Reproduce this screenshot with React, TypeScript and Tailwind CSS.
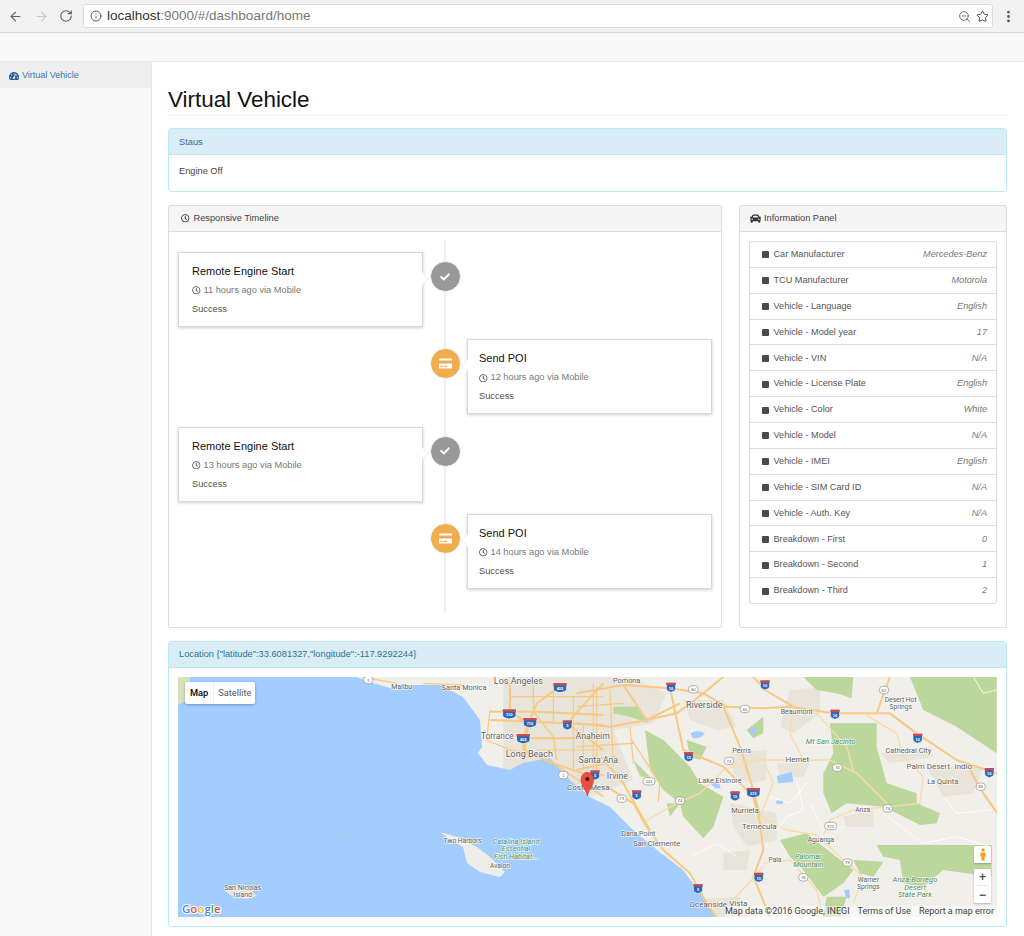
import * as React from "react";
import { ArrowLeft, ArrowRight, RotateCw, Info, ZoomOut, Star, EllipsisVertical } from "lucide-react";
import { FaTachometerAlt, FaRegClock, FaCar, FaCheck, FaCreditCard } from "react-icons/fa";

const infoRows = [
  ["Car Manufacturer", "Mercedes-Benz"],
  ["TCU Manufacturer", "Motorola"],
  ["Vehicle - Language", "English"],
  ["Vehicle - Model year", "17"],
  ["Vehicle - VIN", "N/A"],
  ["Vehicle - License Plate", "English"],
  ["Vehicle - Color", "White"],
  ["Vehicle - Model", "N/A"],
  ["Vehicle - IMEI", "English"],
  ["Vehicle - SIM Card ID", "N/A"],
  ["Vehicle - Auth. Key", "N/A"],
  ["Breakdown - First", "0"],
  ["Breakdown - Second", "1"],
  ["Breakdown - Third", "2"],
];

const events = [
  { title: "Remote Engine Start", time: "11 hours ago via Mobile", side: "left" },
  { title: "Send POI", time: "12 hours ago via Mobile", side: "right" },
  { title: "Remote Engine Start", time: "13 hours ago via Mobile", side: "left" },
  { title: "Send POI", time: "14 hours ago via Mobile", side: "right" },
];

function TimelineCard({ title, time, side }: { title: string; time: string; side: string }) {
  return (
    <div
      className={`relative h-[75px] w-[245px] border border-[#d8d8d8] bg-white pt-[11px] shadow-[0_1px_3px_rgba(0,0,0,0.2)] ${
        side === "left" ? "pl-[13px]" : "pl-[11px]"
      }`}
    >
      {side === "left" ? (
        <span className="absolute right-[-5px] top-[21px] h-[9px] w-[9px] rotate-45 border-r border-t border-[#f0f0f0] bg-white" />
      ) : (
        <span className="absolute left-[-5px] top-[21px] h-[9px] w-[9px] rotate-45 border-b border-l border-[#f0f0f0] bg-white" />
      )}
      <div className="text-[11px] leading-[15px] text-[#111]">{title}</div>
      <div className="mt-[5px] flex items-center gap-[3px] text-[9.25px] leading-[13px] text-[#777]">
        <FaRegClock className="text-[8.5px] text-[#555]" />
        <span>{time}</span>
      </div>
      <div className="mt-[6px] text-[9.25px] leading-[13px] text-[#555]">Success</div>
    </div>
  );
}

function Interstate({ x, y, n }: { x: number; y: number; n: string }) {
  const w = n.length > 2 ? 40 : 28;
  return (
    <g transform={`translate(${x - w / 2},${y - 14})`}>
      <path d={`M0 0H${w}V18Q${w} 26 ${w / 2} 29Q0 26 0 18Z`} fill="#2f66b5" stroke="#fff" strokeWidth="2" />
      <rect x="0" y="0" width={w} height="7" fill="#cf4a4a" />
      <text x={w / 2} y="21" textAnchor="middle" fontSize="12" fill="#fff" fontWeight="700">{n}</text>
    </g>
  );
}

function Route({ x, y, n }: { x: number; y: number; n: string }) {
  const w = n.length > 2 ? 36 : 28;
  return (
    <g>
      <rect x={x - w / 2} y={y - 11} width={w} height="22" rx="10" fill="#fff" stroke="#8c8c8c" strokeWidth="2" />
      <text x={x} y={y + 5} textAnchor="middle" fontSize="13" fill="#555">{n}</text>
    </g>
  );
}

const leftLabels: [string, number, number, number?, string?][] = [
  ["Los Angeles", 1045, 124, 27],
  ["Malibu", 695, 140, 21],
  ["Santa Monica", 882, 144, 22],
  ["Torrance", 982, 291, 25],
  ["Long Beach", 1078, 343, 27],
  ["Two Harbors", 878, 603, 20],
  ["Catalina Island", 1038, 605, 22, "g"],
  ["Essential", 1038, 628, 22, "g"],
  ["Fish Habitat...", 1038, 651, 22, "g"],
  ["Avalon", 990, 680, 20],
  ["San Nicolas", 218, 743, 21],
  ["Island", 218, 765, 21],
];

const rightLabels: [string, number, number, number?, string?][] = [
  ["Pomona", 110, 32, 22],
  ["Riverside", 343, 106, 27],
  ["Beaumont", 620, 125, 21],
  ["Desert Hot", 932, 91, 20],
  ["Springs", 932, 111, 20],
  ["Mt San Jacinto", 722, 217, 23, "g"],
  ["Cathedral City", 955, 244, 22],
  ["Perris", 455, 242, 22],
  ["Hemet", 622, 270, 24],
  ["Palm Desert", 1015, 290, 24],
  ["Indio", 1120, 291, 24],
  ["La Quinta", 1058, 337, 22],
  ["Anaheim", 8, 200, 26],
  ["Santa Ana", 25, 272, 26],
  ["Irvine", 82, 320, 26],
  ["Costa Mesa", -5, 353, 24],
  ["Lake Elsinore", 390, 333, 22],
  ["Murrieta", 465, 422, 22],
  ["Temecula", 508, 470, 24],
  ["Aguanga", 693, 511, 20],
  ["Anza", 818, 422, 20],
  ["Dana Point", 145, 491, 21],
  ["San Clemente", 200, 522, 23],
  ["Pala", 555, 570, 20],
  ["Palomar", 655, 562, 22, "g"],
  ["Mountain", 655, 585, 22, "g"],
  ["Warner", 835, 631, 20],
  ["Springs", 835, 651, 20],
  ["Anza-Borrego", 975, 631, 23, "g"],
  ["Desert", 975, 653, 23, "g"],
  ["State Park", 975, 676, 23, "g"],
  ["Oceanside", 355, 705, 24],
  ["Vista", 445, 701, 24],
];

function Labels({ items }: { items: [string, number, number, number?, string?][] }) {
  return (
    <g fontFamily="Roboto, 'Liberation Sans', sans-serif" textAnchor="middle" dominantBaseline="middle">
      {items.map(([t, x, y, s, kind], i) => (
        <text
          key={i}
          x={x}
          y={y}
          fontSize={s ?? 23}
          fontStyle={kind === "g" ? "italic" : "normal"}
          fill={kind === "g" ? "#4f8f57" : "#5f5f5f"}
          stroke="#ffffff"
          strokeOpacity="0.75"
          strokeWidth="4"
          paintOrder="stroke"
        >
          {t}
        </text>
      ))}
    </g>
  );
}

function MapDrawing() {
  return (
    <svg viewBox="0 0 819 240" className="block h-full w-full">
      <rect width="819" height="240" fill="#f1efe9" />
      {/* urban patches */}
      <g transform="translate(412,-7) scale(0.33333)" fill="#e8e4da">
        <path d="M-260 20H120L230 70 190 160 70 180 130 330 0 380-120 340-260 300Z" />
        <path d="M280 90L400 90 440 170 380 180 300 150Z" />
        <path d="M600 60L690 50 690 130 610 190 570 170Z" />
        <path d="M420 250L530 240 530 330 480 340 430 310Z" />
        <path d="M420 400L560 430 560 510 470 530 430 470Z" />
        <path d="M400 550L480 540 470 600 400 600Z" />
        <path d="M560 280L660 280 640 320 570 320Z" />
        <path d="M760 440L850 420 850 470 770 470Z" />
        <path d="M300 690L450 680 480 740 330 740Z" />
        <path d="M1010 290L1180 290 1150 370 1060 380Z" />
        <path d="M870 250L1020 230 1030 260 900 280Z" />
      </g>
      {/* parks */}
      <g transform="translate(412,-7) scale(0.33333)" fill="#bbd79b">
        <path d="M165 180L220 210 300 290 330 340 400 380 370 470 340 505 280 440 270 400 220 360 180 300Z" />
        <path d="M720 160L860 160 860 230 890 340 980 370 980 400 1050 430 1040 460 990 465 920 430 880 410 770 400 725 430 700 370 700 310 730 250Z" />
        <path d="M960 21L1220 21V250L1100 170 1000 120Z" />
        <path d="M640 21H790L785 85 740 70 680 60Z" />
        <path d="M570 510L650 490 700 530 790 600 760 640 700 680 640 600 600 560Z" />
        <path d="M860 525H1205V620L1060 600 1000 650 940 640 930 570 880 560Z" />
        <path d="M710 680H770L750 740H700Z" />
        <path d="M70 110L140 110 175 160 120 140 70 130Z" />
        <path d="M470 180L520 140 520 190 490 205Z" />
        <path d="M290 210L350 230 330 270 300 260Z" />
        <path d="M230 400L270 400 240 440Z" />
        <path d="M130 270L180 320 150 320Z" />
        <path d="M790 570L880 575 850 620 810 610Z" />
      </g>
      {/* water */}
      <path
        d="M12 0H179L195 6 219 13 230 8 262 8 285 20 302 43 304 70 300 76 309 88 332 93 345 86 372 81 392 103 412 120 432 130 455 153 479 173 505 193 525 220 539 240H0V28L12 20Z"
        fill="#a3ccff"
      />
      <path d="M0 0H12V20L0 28Z" fill="#d7e2bb" />
      <path d="M262 155L279 160 299 170 312 180 327 195 322 200 302 195 289 186 285 170 272 163Z" fill="#efede7" />
      <path d="M47 214L60 208 72 213 79 219 68 222 55 220Z" fill="#e4e2dc" />
      <path d="M165 153L168 155 166 158Z" fill="#bcd99a" />
      {/* inland lakes */}
      <g transform="translate(412,-7) scale(0.33333)" fill="#a3ccff">
        <path d="M302 190Q320 178 345 190 330 208 308 204Z" />
        <path d="M478 178L500 170 498 192 484 195Z" />
        <path d="M560 318L605 305 610 335 565 340Z" />
        <path d="M360 340L385 330 392 355 375 355Z" />
        <path d="M762 660L778 658 780 685 768 684Z" />
        <path d="M558 392L580 390 578 402 560 402Z" />
      </g>
      {/* left roads */}
      <g transform="translate(-8,-37) scale(0.33333)" fill="none" stroke="#f7c983" strokeWidth="6" strokeLinejoin="round">
        <path d="M580 112L680 130 M760 130L880 135" strokeWidth="4" />
        <path d="M1170 140L1100 190 1060 290 1060 330 1150 370 1240 400 1300 405" />
        <path d="M960 215H1100L1300 225" />
        <path d="M1020 130L1020 215 1075 250 1060 360" />
        <path d="M1300 130L1190 250 1300 330" />
        <path d="M960 240L1190 250 1300 255" />
        <path d="M1060 295H1300" />
        <path d="M1090 130V215L1150 290 1160 360" strokeWidth="4" />
        <path d="M960 210L950 300 1020 330 1100 350 1150 370 1300 470" strokeWidth="4" />
        <path d="M1020 170H1300 M1150 130V250 M1210 170V400 M1270 130V400 M1100 330H1300 M1240 250V390" strokeWidth="3.5" />
      </g>
      {/* right roads */}
      <g transform="translate(412,-7) scale(0.33333)" fill="none" stroke="#f7c983" strokeWidth="6" strokeLinejoin="round">
        <path d="M-40 70L100 45 240 55 340 70 410 110 520 115 600 110 730 130 900 130 980 190 1100 270 1190 300 1222 310" />
        <path d="M100 45L170 150 260 130 340 70 400 21" />
        <path d="M240 55L280 240 400 290 490 380 510 460 520 540 490 620 540 742" />
        <path d="M400 110L450 230 490 360 510 440" />
        <path d="M-40 160L60 170 170 150 270 100" />
        <path d="M-40 300L50 280 100 340 150 430 180 480" />
        <path d="M-40 360L50 350 130 400 170 470 220 540 300 610 350 700 380 742" />
        <path d="M1140 300L1180 370 1222 430" />
        <path d="M490 21L525 60 610 110" />
        <path d="M860 130L885 60 900 21" />
        <path d="M125 210L210 340 205 395" strokeWidth="4" />
        <path d="M20 50V330 M-40 110L100 100 M60 60L70 290 M-40 230L130 220 M120 170L130 280 M-40 270L80 260" strokeWidth="3.5" />
      </g>
      <g transform="translate(412,-7) scale(0.33333)" fill="none" stroke="#f9dca6" strokeWidth="4" strokeLinejoin="round">
        <path d="M490 270H720L800 310 900 410 990 400 1000 320" />
        <path d="M170 450L260 400 330 370 400 300 490 270" />
        <path d="M510 440L590 480 680 495 750 560 820 620 790 700" />
        <path d="M520 580L600 570 680 660 700 742" />
        <path d="M430 690L520 590" />
        <path d="M700 495L720 450 790 420 900 410" />
        <path d="M610 110L600 190 640 270" />
        <path d="M680 130L770 230 790 300" />
        <path d="M820 130L920 190 940 260 1000 320" />
        <path d="M520 270L550 340 510 440" />
      </g>
      {/* white minor roads */}
      <g transform="translate(412,-7) scale(0.33333)" fill="none" stroke="#ffffff" strokeWidth="2.5">
        <path d="M620 330L640 420 590 440 560 480" />
        <path d="M660 400L700 480 760 470" />
        <path d="M880 430L1000 520 1100 500 1200 530" />
        <path d="M1060 380L1100 430 1200 420" />
        <path d="M1150 20L1180 70 1220 60" />
        <path d="M540 380L600 400 650 340" />
        <path d="M300 560L380 520 440 560" />
      </g>
      <g transform="translate(-8,-37) scale(0.33333)">
        <Labels items={leftLabels} />
        <Interstate x={1170} y={143} n="405" />
        <Interstate x={1018} y={222} n="110" />
        <Interstate x={1080} y={248} n="710" />
        <Interstate x={1192} y={255} n="5" />
        <Interstate x={1060} y={296} n="405" />
        <Interstate x={1275} y={405} n="5" />
        <Route x={595} y={120} n="1" />
        <Route x={1180} y={405} n="1" />
      </g>
      <g transform="translate(412,-7) scale(0.33333)" fontFamily="'Liberation Sans', sans-serif">
        <Labels items={rightLabels} />
        <Interstate x={243} y={52} n="10" />
        <Interstate x={525} y={45} n="10" />
        <Interstate x={735} y={133} n="10" />
        <Interstate x={983} y={205} n="10" />
        <Interstate x={1198} y={308} n="10" />
        <Interstate x={296} y={260} n="15" />
        <Interstate x={435} y={378} n="15" />
        <Interstate x={490} y={368} n="215" />
        <Interstate x={506} y={622} n="15" />
        <Interstate x={140} y={375} n="5" />
        <Interstate x={324} y={656} n="5" />
        <Route x={310} y={58} n="60" />
        <Route x={465} y={117} n="60" />
        <Route x={882} y={60} n="62" />
        <Route x={1172} y={350} n="86" />
        <Route x={417} y={273} n="74" />
        <Route x={742} y={293} n="74" />
        <Route x={893} y={415} n="74" />
        <Route x={270} y={392} n="74" />
        <Route x={177} y={334} n="241" />
        <Route x={95} y={386} n="73" />
        <Route x={722} y={468} n="371" />
        <Route x={772} y={578} n="79" />
        <Route x={640} y={622} n="76" />
      </g>
      {/* marker */}
      <g transform="translate(-8,-37) scale(0.33333)">
        <path d="M1252 468C1246 445 1233 438 1233 418A19 21 0 0 1 1271 418C1271 438 1258 445 1252 468Z" fill="#ea4f43" stroke="#b8352c" strokeWidth="1.5" />
        <circle cx="1252" cy="417" r="6" fill="#3a0d0a" />
      </g>
      <text x="4" y="236" fontFamily="'Open Sans', sans-serif" fontSize="11.5" fontWeight="600" stroke="#ffffff" strokeWidth="2" paintOrder="stroke">
        <tspan fill="#4d83e8">G</tspan>
        <tspan fill="#e0513f">o</tspan>
        <tspan fill="#f2b632">o</tspan>
        <tspan fill="#4d83e8">g</tspan>
        <tspan fill="#3fa457">l</tspan>
        <tspan fill="#e0513f">e</tspan>
      </text>
    </svg>
  );
}

export default function App() {
  return (
    <div className="flex h-[936px] w-[1024px] flex-col overflow-hidden bg-white font-['Liberation_Sans',Arial,sans-serif] text-[#333]">
      {/* browser chrome */}
      <div className="flex h-[33px] flex-none items-center border-b border-[#d6d6d6] bg-[#f2f2f2] pl-[8px] pr-[8px]">
        <ArrowLeft className="h-[15px] w-[15px] text-[#5f6368]" strokeWidth={1.75} />
        <ArrowRight className="ml-[11px] h-[15px] w-[15px] text-[#c8c8c8]" strokeWidth={1.75} />
        <RotateCw className="ml-[10px] h-[14px] w-[14px] text-[#5f6368]" strokeWidth={2} />
        <div className="ml-[10px] flex h-[24px] flex-1 items-center rounded-[3px] border border-[#dcdcdc] bg-white pl-[6px] pr-[3px]">
          <Info className="h-[12px] w-[12px] text-[#444]" strokeWidth={1.75} />
          <span className="ml-[5px] text-[13.5px] text-[#333]">
            localhost<span className="text-[#777]">:9000/#/dashboard/home</span>
          </span>
          <ZoomOut className="ml-auto h-[13px] w-[13px] text-[#666]" strokeWidth={1.75} />
          <Star className="ml-[5px] h-[13px] w-[13px] text-[#444]" strokeWidth={1.75} />
        </div>
        <EllipsisVertical className="ml-[8px] h-[15px] w-[15px] text-[#555]" strokeWidth={2.5} />
      </div>
      {/* navbar */}
      <div className="h-[29px] flex-none border-b border-[#e7e7e7] bg-[#f8f8f8]" />
      <div className="flex min-h-0 flex-1">
        <aside className="w-[152px] flex-none border-r border-[#e7e7e7] bg-[#f8f8f8]">
          <div className="flex h-[26px] items-center gap-[3px] border-b border-[#ececec] bg-[#eeeeee] pl-[9px] pt-[3px] text-[9px] text-[#337ab7]">
            <FaTachometerAlt className="text-[10px] text-[#2a6496]" />
            <span>Virtual Vehicle</span>
          </div>
        </aside>
        <main className="min-w-0 flex-1 pl-[16px] pr-[17px]">
          <h1 className="mt-[24px] border-b border-[#eeeeee] pb-[1px] text-[22.4px] font-normal leading-[28px] text-[#111]">Virtual Vehicle</h1>

          <section className="mt-[12px] h-[64px] rounded-[3px] border border-[#bce8f1] bg-white">
            <div className="flex h-[26px] items-center rounded-t-[2px] border-b border-[#bce8f1] bg-[#d9edf7] pl-[10px] pt-[3px] text-[9.25px] text-[#31708f]">Staus</div>
            <div className="pl-[10px] pt-[10px] text-[9.25px] leading-[13px] text-[#444]">Engine Off</div>
          </section>

          <div className="mt-[13px] flex h-[423px] gap-[17px]">
            <section className="w-[554px] flex-none rounded-[2px] border border-[#dddddd] bg-white">
              <div className="flex h-[26px] items-center gap-[4px] border-b border-[#dddddd] bg-[#f5f5f5] pl-[12px] text-[9.25px] text-[#444]">
                <FaRegClock className="text-[8.5px] text-[#333]" />
                <span>Responsive Timeline</span>
              </div>
              <div className="relative mx-[9px] mt-[8px] flex flex-col gap-[12.33px] pb-[23px] pt-[12px]">
                <div className="absolute bottom-0 left-[266px] top-0 w-[2px] bg-[#eeeeee]" />
                {events.map((e, i) => (
                  <div key={i} className="relative grid grid-cols-[245px_30px_245px] gap-x-[7px]">
                    <div>{e.side === "left" && <TimelineCard title={e.title} time={e.time} side={e.side} />}</div>
                    <div
                      className={`-ml-[0.5px] mt-[9px] flex h-[31px] w-[31px] items-center justify-center rounded-full border border-[#f4f4f4] text-white ${
                        e.side === "left" ? "bg-[#999999]" : "bg-[#f0ad4e]"
                      }`}
                    >
                      {e.side === "left" ? <FaCheck className="text-[10px]" /> : <FaCreditCard className="text-[13px]" />}
                    </div>
                    <div>{e.side === "right" && <TimelineCard title={e.title} time={e.time} side={e.side} />}</div>
                  </div>
                ))}
              </div>
            </section>

            <section className="min-w-0 flex-1 rounded-[2px] border border-[#dddddd] bg-white">
              <div className="flex h-[26px] items-center gap-[3px] border-b border-[#dddddd] bg-[#f5f5f5] pl-[10px] text-[9.25px] text-[#444]">
                <FaCar className="text-[11px] text-[#333]" />
                <span>Information Panel</span>
              </div>
              <div className="mx-[9px] mt-[9px] flex h-[363px] flex-col rounded-[2px] border border-[#dddddd]">
                {infoRows.map(([k, v]) => (
                  <div key={k} className="flex flex-1 items-center border-b border-[#dddddd] pl-[12px] pr-[9px] pt-[1px] text-[9.15px] text-[#555] last:border-b-0">
                    <span className="mr-[4.5px] h-[7px] w-[7px] rounded-[1px] bg-[#4a4a4a]" />
                    <span>{k}</span>
                    <em className="ml-auto text-[#777]">{v}</em>
                  </div>
                ))}
              </div>
            </section>
          </div>

          <section className="mt-[13px] h-[286px] rounded-[3px] border border-[#bce8f1] bg-white">
            <div className="flex h-[26px] items-center border-b border-[#bce8f1] bg-[#d9edf7] pl-[10px] text-[9.25px] text-[#31708f]">
              {'Location {"latitude":33.6081327,"longitude":-117.9292244}'}
            </div>
            <div className="relative mx-[9px] mt-[9px] h-[240px] overflow-hidden">
              <MapDrawing />
              <div className="absolute left-[7px] top-[5px] flex h-[22px] rounded-[2px] bg-white font-['Roboto',sans-serif] text-[9.25px] shadow-[0_1px_3px_rgba(0,0,0,0.3)]">
                <span className="flex items-center border-r border-[#eeeeee] px-[5px] font-medium text-black">Map</span>
                <span className="flex items-center px-[4px] text-[#565656]">Satellite</span>
              </div>
              <div className="absolute bottom-[54px] right-[6px] flex h-[17px] w-[17px] items-center justify-center rounded-[1px] bg-white shadow-[0_1px_2px_rgba(0,0,0,0.25)]">
                <svg viewBox="0 0 10 16" className="h-[13px] w-[8px]">
                  <circle cx="5" cy="2.5" r="2.2" fill="#f2a31f" />
                  <path d="M2 5.5H8L8.6 10.5H7V15.5H3V10.5H1.4Z" fill="#f2a31f" />
                </svg>
              </div>
              <div className="absolute bottom-[14px] right-[6px] flex h-[34px] w-[17px] flex-col items-center rounded-[1px] bg-white font-bold text-[#555] shadow-[0_1px_2px_rgba(0,0,0,0.25)]">
                <span className="flex h-[17px] items-center border-b border-[#e6e6e6] px-[2px] text-[12px] leading-none">+</span>
                <span className="flex h-[17px] items-center text-[12px] leading-none">−</span>
              </div>
              <div className="absolute bottom-0 right-0 flex h-[11px] items-center gap-[8px] bg-white/50 pr-[3px] font-['Roboto',sans-serif] text-[9px] leading-none text-[#444]">
                <span>Map data ©2016 Google, INEGI</span>
                <span>Terms of Use</span>
                <span>Report a map error</span>
              </div>
            </div>
          </section>
        </main>
      </div>
    </div>
  );
}
